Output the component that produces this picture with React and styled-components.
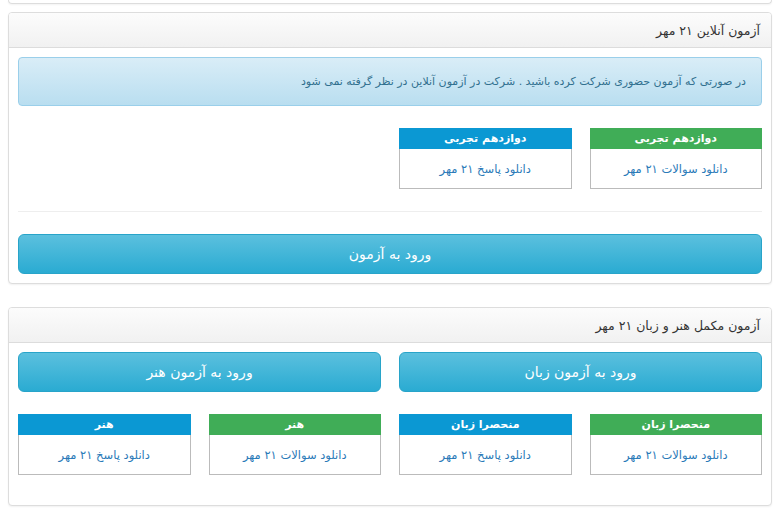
import React from "react";
import styled, { createGlobalStyle } from "styled-components";

const GlobalStyle = createGlobalStyle`
  body {
    margin: 0;
    padding: 0 7px 0 8px;
    background: #fff;
    font-family: "DejaVu Sans", "Noto Sans", sans-serif;
    direction: rtl;
    color: #333;
  }
  * { box-sizing: border-box; }
`;

const PanelTail = styled.div`
  height: 4px;
  border: 1px solid #ddd;
  border-top: 0;
  border-radius: 0 0 4px 4px;
  box-shadow: 0 1px 2px rgba(0, 0, 0, 0.05);
  margin-bottom: 8px;
`;

const Panel = styled.section`
  border: 1px solid #ddd;
  border-radius: 4px;
  background: #fff;
  box-shadow: 0 1px 2px rgba(0, 0, 0, 0.06);
  margin-bottom: 23px;
`;

const PanelHeading = styled.div`
  height: 35px;
  display: flex;
  align-items: center;
  padding: 0 11px;
  background: linear-gradient(to bottom, #fcfcfc 0%, #f1f1f1 100%);
  border-bottom: 1px solid #dcdcdc;
  border-radius: 3px 3px 0 0;
  font-size: 12.5px;
  color: #333;
`;

const PanelBody = styled.div`
  padding: ${(p) => p.$pad || "9px 9px 9px"};
`;

const Alert = styled.div`
  height: 49px;
  display: flex;
  align-items: center;
  padding: 0 15px;
  border: 1px solid #9acfea;
  border-radius: 4px;
  background: linear-gradient(to bottom, #d9edf7 0%, #b9def0 100%);
  color: #31708f;
  font-size: 11px;
  margin-bottom: 22px;
`;

const Grid = styled.div`
  display: grid;
  grid-template-columns: repeat(${(p) => p.$cols}, 1fr);
  column-gap: 18px;
  margin-bottom: ${(p) => p.$mb || 0}px;
`;

const Card = styled.div`
  border: 1px solid #bbb;
  border-top: 0;
  background: #fff;
`;

const CardHead = styled.div`
  height: 21px;
  display: flex;
  align-items: center;
  justify-content: center;
  margin: 0 -1px;
  background: ${(p) => (p.$tone === "green" ? "#40ad57" : "#0b98d3")};
  color: #fff;
  font-weight: bold;
  font-size: 11px;
`;

const CardLink = styled.a`
  height: 39px;
  display: flex;
  align-items: center;
  justify-content: center;
  color: #2a7ab8;
  font-size: 11.5px;
  text-decoration: none;
`;

const Divider = styled.hr`
  border: 0;
  border-top: 1px solid #eee;
  margin: 0 0 22px;
`;

const BigButton = styled.button`
  width: 100%;
  height: 40px;
  display: flex;
  align-items: center;
  justify-content: center;
  border: 1px solid #28a4c9;
  border-radius: 6px;
  background: linear-gradient(to bottom, #5bc0de 0%, #2aabd2 100%);
  color: #fff;
  font-family: inherit;
  font-size: 14px;
  cursor: pointer;
`;

function DownloadCard({ tone, title, label }) {
  return (
    <Card>
      <CardHead $tone={tone}>{title}</CardHead>
      <CardLink href="#">{label}</CardLink>
    </Card>
  );
}

export default function App() {
  return (
    <>
      <GlobalStyle />
      <PanelTail />
      <Panel>
        <PanelHeading>آزمون آنلاین ۲۱ مهر</PanelHeading>
        <PanelBody>
          <Alert>
            در صورتی که آزمون حضوری شرکت کرده باشید . شرکت در آزمون آنلاین در نظر گرفته نمی شود
          </Alert>
          <Grid $cols={4} $mb={22}>
            <DownloadCard tone="green" title="دوازدهم تجربی" label="دانلود سوالات ۲۱ مهر" />
            <DownloadCard tone="blue" title="دوازدهم تجربی" label="دانلود پاسخ ۲۱ مهر" />
          </Grid>
          <Divider />
          <BigButton>ورود به آزمون</BigButton>
        </PanelBody>
      </Panel>
      <Panel>
        <PanelHeading>آزمون مکمل هنر و زبان ۲۱ مهر</PanelHeading>
        <PanelBody $pad="9px 9px 30px">
          <Grid $cols={2} $mb={22}>
            <BigButton>ورود به آزمون زبان</BigButton>
            <BigButton>ورود به آزمون هنر</BigButton>
          </Grid>
          <Grid $cols={4}>
            <DownloadCard tone="green" title="منحصرا زبان" label="دانلود سوالات ۲۱ مهر" />
            <DownloadCard tone="blue" title="منحصرا زبان" label="دانلود پاسخ ۲۱ مهر" />
            <DownloadCard tone="green" title="هنر" label="دانلود سوالات ۲۱ مهر" />
            <DownloadCard tone="blue" title="هنر" label="دانلود پاسخ ۲۱ مهر" />
          </Grid>
        </PanelBody>
      </Panel>
    </>
  );
}
